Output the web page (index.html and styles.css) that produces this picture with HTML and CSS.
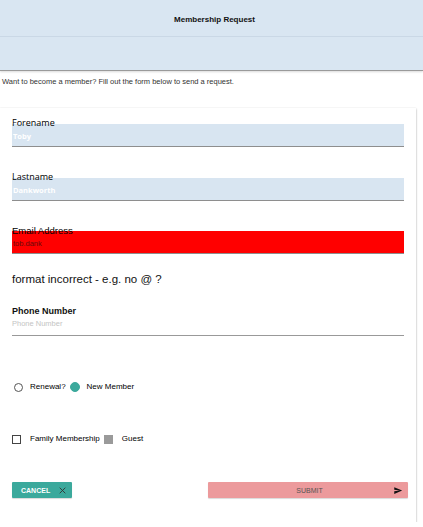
FILE: index.html
```html
<!DOCTYPE html>
<html>
<head>
<meta charset="utf-8">
<link rel="stylesheet" href="styles.css">
</head>
<body>
<header class="topbar">
  <div class="title-row">Membership Request</div>
  <div class="sub-row"></div>
</header>
<p class="intro">Want to become a member? Fill out the form below to send a request.</p>
<main class="card">
  <div class="field">
    <div class="label">Forename</div>
    <div class="box"><span class="value">Toby</span></div>
  </div>
  <div class="field">
    <div class="label">Lastname</div>
    <div class="box"><span class="value">Dankworth</span></div>
  </div>
  <div class="field email">
    <div class="label">Email Address</div>
    <div class="box error"><span class="value">tob.dank</span></div>
  </div>
  <div class="error-msg">format incorrect - e.g. no @ ?</div>
  <div class="phone">
    <div class="plabel">Phone Number</div>
    <div class="placeholder">Phone Number</div>
  </div>
  <div class="choice-row radios">
    <span class="radio"></span><span class="opt">Renewal?</span>
    <span class="radio on"></span><span class="opt">New Member</span>
  </div>
  <div class="choice-row checks">
    <span class="check"></span><span class="opt">Family Membership</span>
    <span class="check on"></span><span class="opt">Guest</span>
  </div>
  <div class="actions">
    <button class="btn cancel">CANCEL
      <svg width="7" height="7" viewBox="0 0 10 10"><path d="M1 1L9 9M9 1L1 9" stroke="#333" stroke-width="1.3"/></svg>
    </button>
    <button class="btn submit"><span>SUBMIT</span>
      <svg class="send" width="10" height="9" viewBox="0 0 24 24"><path d="M2.01 21L23 12 2.01 3 2 10l15 2-15 2z" fill="#111"/></svg>
    </button>
  </div>
</main>
</body>
</html>
```
FILE: styles.css
```css
html, body {
  margin: 0;
  padding: 0;
  background: #fff;
  font-family: "Liberation Sans", Arial, sans-serif;
}
.topbar {
  height: 70px;
  background: #d9e6f2;
  border-bottom: 1px solid #9a9a9a;
  box-shadow: 0 1px 2px rgba(0,0,0,0.15);
}
.title-row {
  height: 37px;
  border-bottom: 1px solid #cad8e6;
  display: flex;
  align-items: center;
  justify-content: center;
  font-size: 8px;
  font-weight: bold;
  color: #111;
  box-sizing: border-box;
  padding-left: 6px;
  padding-top: 3px;
}
.intro {
  margin: 0;
  padding: 6px 0 0 2px;
  font-size: 7.5px;
  line-height: 10px;
  color: #333;
}
.card {
  margin-top: 21px;
  width: 416px;
  box-sizing: border-box;
  padding: 9px 12px 24px 12px;
  background: #fff;
  box-shadow: 0 1px 2px rgba(0,0,0,0.35), 0 0 1px rgba(0,0,0,0.08);
}
.field {
  margin-bottom: 24px;
}
.field.email {
  margin-bottom: 18px;
}
.label {
  font-family: "Open Sans", "Noto Sans", sans-serif;
  font-size: 9px;
  line-height: 12px;
  color: #000;
  margin-bottom: -5px;
  position: relative;
}
.email .label {
  font-family: "Liberation Sans", Arial, sans-serif;
  font-size: 9.5px;
  margin-bottom: -6px;
}
.box {
  height: 22px;
  width: 392px;
  background: #d8e5f1;
  border-bottom: 1px solid #8e8e8e;
  box-sizing: content-box;
}
.box.error {
  background: #ff0000;
}
.value {
  display: block;
  padding: 7px 0 0 1px;
  font-family: "Open Sans", "Noto Sans", sans-serif;
  font-weight: bold;
  font-size: 7.5px;
  line-height: 10px;
  color: #fff;
}
.error .value {
  font-family: "Liberation Sans", Arial, sans-serif;
  font-weight: normal;
  color: #6a0a0a;
  padding-top: 8px;
}
.error-msg {
  font-size: 11.5px;
  line-height: 14px;
  color: #111;
}
.phone {
  margin-top: 20px;
  width: 392px;
  border-bottom: 1px solid #999;
  padding-bottom: 7px;
}
.plabel {
  font-size: 9px;
  line-height: 11px;
  font-weight: bold;
  color: #111;
}
.placeholder {
  margin-top: 2px;
  font-size: 7.5px;
  line-height: 9px;
  color: #c4c4c4;
}
.choice-row {
  display: flex;
  align-items: center;
  font-size: 8px;
  line-height: 10px;
  color: #000;
}
.radios {
  margin-top: 46px;
  padding-left: 2px;
}
.checks {
  margin-top: 42px;
}
.radio {
  width: 7px;
  height: 7px;
  border: 1px solid #555;
  border-radius: 50%;
  margin-right: 7px;
}
.radio.on {
  background: #3ba99c;
  border-color: #3ba99c;
  width: 8px;
  height: 8px;
  margin-left: 4px;
  margin-right: 7px;
}
.check {
  width: 7px;
  height: 7px;
  border: 1px solid #444;
  margin-right: 9px;
}
.check.on {
  background: #9a9a9a;
  border-color: #9a9a9a;
  width: 7px;
  height: 7px;
  margin-left: 4px;
  margin-right: 9px;
}
.actions {
  margin-top: 38px;
  display: flex;
  justify-content: space-between;
  width: 396px;
}
.btn {
  border: none;
  margin: 0;
  height: 16px;
  border-radius: 1px;
  font-family: "Liberation Sans", Arial, sans-serif;
  font-size: 7px;
  display: flex;
  align-items: center;
  box-shadow: 0 1px 1px rgba(0,0,0,0.15);
}
.cancel {
  width: 60px;
  background: #3ba99c;
  color: #fff;
  font-weight: bold;
  padding: 0 0 0 9px;
  gap: 9px;
}
.submit {
  width: 200px;
  background: #ec9a9c;
  color: #555;
  padding: 0 5px 0 0;
  position: relative;
  justify-content: center;
}
.submit span {
  margin-left: 8px;
}
.send {
  position: absolute;
  right: 5px;
  top: 4px;
}
```
